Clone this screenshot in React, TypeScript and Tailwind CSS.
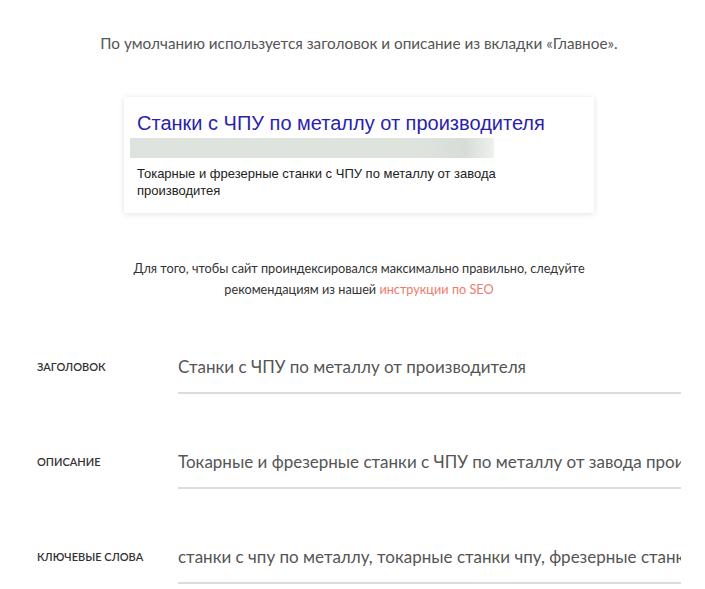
import React from "react";

const futura = { fontFamily: '"Lato", "Noto Sans", sans-serif' };

function Field({ label, value }: { label: string; value: string }) {
  return (
    <div className="flex items-start">
      <div className="w-[178px] shrink-0 pl-[37px] text-[11px] leading-[22px] font-semibold uppercase text-[#333]">
        {label}
      </div>
      <div className="w-[503px] overflow-hidden">
        <div className="h-[36px] whitespace-nowrap text-[17px] leading-[22px] text-[#555]">{value}</div>
        <div className="h-[2px] bg-[#dcdcdc]" />
      </div>
    </div>
  );
}

export default function App() {
  return (
    <div className="w-[705px] h-[589px] overflow-hidden bg-white" style={futura}>
      <div className="flex flex-col items-center pl-[13px] pt-[33px]">
        <p className="text-[15.3px] leading-[20px] text-[#555]">
          По умолчанию используется заголовок и описание из вкладки «Главное».
        </p>

        <div className="mt-[44px] w-[470px] h-[116px] bg-white shadow-[0_1px_6px_rgba(0,0,0,0.12)] pt-[14px] font-['Liberation_Sans',Arial,sans-serif]">
          <div className="pl-[13px] text-[20px] leading-[24px] text-[#2b1fae]">
            Станки с ЧПУ по металлу от производителя
          </div>
          <div className="ml-[6px] mt-[3px] h-[20px] w-[364px] bg-[linear-gradient(90deg,#dde4de_0%,#dde4de_80%,#d5ddd6_92%,#eef1ee_100%)]" />
          <div className="pl-[13px] pr-[90px] mt-[7px] text-[13px] leading-[17px] text-[#222]">
            Токарные и фрезерные станки с ЧПУ по металлу от завода производитея
          </div>
        </div>

        <p className="mt-[45px] text-center text-[12.7px] leading-[21px] text-[#333]">
          Для того, чтобы сайт проиндексировался максимально правильно, следуйте
          <br />
          рекомендациям из нашей <span className="text-[#f07b6b]">инструкции по SEO</span>
        </p>
      </div>

      <div className="mt-[56px] flex flex-col gap-[57px]">
        <Field label="Заголовок" value="Станки с ЧПУ по металлу от производителя" />
        <Field label="Описание" value="Токарные и фрезерные станки с ЧПУ по металлу от завода производитея" />
        <Field label="Ключевые слова" value="станки с чпу по металлу, токарные станки чпу, фрезерные станки чпу" />
      </div>
    </div>
  );
}
